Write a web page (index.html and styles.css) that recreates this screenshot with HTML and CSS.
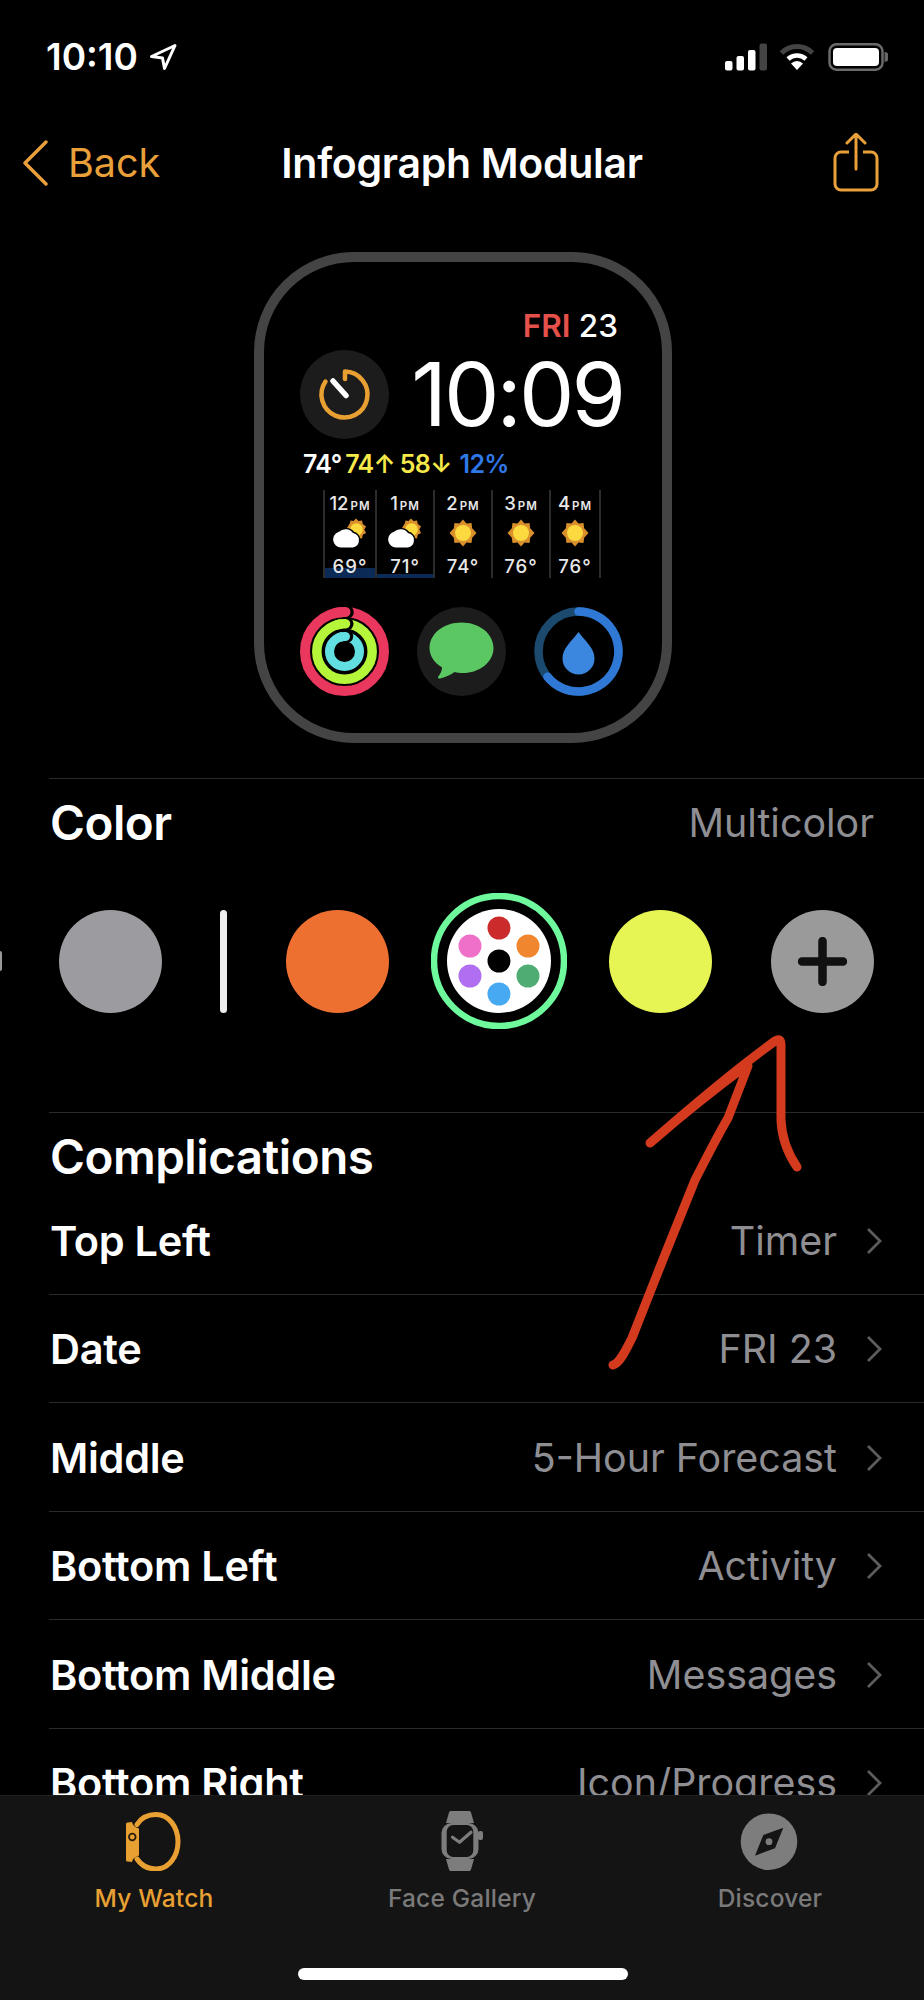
FILE: index.html
```html
<!DOCTYPE html>
<html lang="en">
<head>
<meta charset="utf-8">
<title>Infograph Modular</title>
<link rel="stylesheet" href="styles.css">
</head>
<body>
<svg class="defs" width="0" height="0" aria-hidden="true">
  <symbol id="sun" viewBox="0 0 30 30">
    <polygon fill="#d9902c" points="15,1.5 18.5,5.6 23.5,5 24.2,10.3 28.5,15 24.2,19.700 23.500,25 18.500,24.400 15,28.500 11.500,24.400 6.500,25 5.800,19.700 1.500,15 5.800,10.300 6.500,5 11.500,5.600"/>
    <circle cx="15" cy="15" r="8" fill="#fbd93f"/>
  </symbol>
  <symbol id="partly" viewBox="0 0 34 30">
    <polygon fill="#d9902c" points="23,0.500 25.500,3 29,2.500 29.800,6 33,8.500 31.300,11.500 33,15 29.800,16.800 29,20.500 25.500,20 23,22.500 20,20 17,20 16,16 14,10 17,5 17.500,2.500 20.500,3"/>
    <circle cx="23.500" cy="11.500" r="6.300" fill="#fbd93f"/>
    <path fill="#000" stroke="#000" stroke-width="3" d="M8 29.500a8 8 0 0 1-2-15.700A9.500 9.500 0 0 1 20 15a7.400 7.400 0 0 1 0 14.500z"/>
    <path fill="#fff" d="M8 29.500a8 8 0 0 1-2-15.700A9.500 9.500 0 0 1 20 15a7.400 7.400 0 0 1 0 14.500z"/>
  </symbol>
</svg>
<div class="screen">
  <header class="status">
    <div class="status-left">
      <span class="clock">10:10</span>
      <svg class="loc" viewBox="0 0 28 28"><path d="M26 2.500 2.500 13.500l11 1.500 2 10.500z" fill="none" stroke="#fff" stroke-width="3" stroke-linejoin="round"/></svg>
    </div>
    <div class="status-right">
      <svg class="signal" viewBox="0 0 42 28"><rect x="0" y="18" width="7.500" height="9.500" rx="2" fill="#fff"/><rect x="11.500" y="13" width="7.500" height="14.500" rx="2" fill="#fff"/><rect x="23" y="7" width="7.500" height="20.500" rx="2" fill="#fff"/><rect x="34.500" y="0.500" width="7.500" height="27" rx="2" fill="#444"/></svg>
      <svg class="wifi" viewBox="0 0 36 28"><path d="M2.500 10a22 22 0 0 1 31 0" fill="none" stroke="#444" stroke-width="5"/><path d="M9 16a13.500 13.500 0 0 1 18 0" fill="none" stroke="#fff" stroke-width="4.500"/><path d="M18 27l-6-6.500a8.400 8.400 0 0 1 12 0z" fill="#fff"/></svg>
      <svg class="battery" viewBox="0 0 60 28"><rect x="1.500" y="1.250" width="53" height="25.500" rx="7" fill="none" stroke="#6a6a6a" stroke-width="2.500"/><rect x="5" y="5" width="46" height="18" rx="4" fill="#fff"/><path d="M56.500 9a5 5 0 0 1 0 10z" fill="#666"/></svg>
    </div>
  </header>

  <nav class="nav">
    <div class="back">
      <svg class="back-chev" viewBox="0 0 26 46"><path d="M24 2 3 23l21 21" fill="none" stroke="#e9a03b" stroke-width="3.400" stroke-linecap="round" stroke-linejoin="round"/></svg>
      <span>Back</span>
    </div>
    <div class="title">Infograph Modular</div>
    <div class="share">
      <svg class="share-icon" viewBox="0 0 46 60"><path d="M16 19H8a6 6 0 0 0-6 6v26a6 6 0 0 0 6 6h30a6 6 0 0 0 6-6V25a6 6 0 0 0-6-6h-8" fill="none" stroke="#e9a03b" stroke-width="3"/><path d="M23 36V2M14 10l9-9 9 9" fill="none" stroke="#e9a03b" stroke-width="3" stroke-linecap="round" stroke-linejoin="round"/></svg>
    </div>
  </nav>

  <section class="watch">
    <div class="w-date"><span class="w-fri">FRI</span> 23</div>
    <div class="w-main">
      <svg class="w-comp" viewBox="0 0 89 89">
        <circle cx="44.500" cy="44.500" r="44.500" fill="#1c1c1c"/>
        <path d="M45 21.500V29M45 21.500a23 23 0 1 1-19.500 10" fill="none" stroke="#e9a033" stroke-width="4.500" stroke-linecap="round"/>
        <path d="M33 31 46 45.500" stroke="#fff" stroke-width="5.500" stroke-linecap="round"/>
      </svg>
      <div class="w-time">10:09</div>
    </div>
    <div class="w-weather"><span class="c-white">74°</span> <span class="c-yellow">74↑ 58↓</span> <span class="c-blue">12%</span></div>
    <div class="forecast">
      <div class="fc">
        <i class="rain rain-hi"></i>
        <div class="fc-h">12<small>PM</small></div>
        <svg class="fc-i"><use href="#partly"/></svg>
        <div class="fc-t">69°</div>
      </div>
      <div class="fc">
        <i class="rain rain-lo"></i>
        <div class="fc-h">1<small>PM</small></div>
        <svg class="fc-i"><use href="#partly"/></svg>
        <div class="fc-t">71°</div>
      </div>
      <div class="fc">
        <div class="fc-h">2<small>PM</small></div>
        <svg class="fc-i"><use href="#sun"/></svg>
        <div class="fc-t">74°</div>
      </div>
      <div class="fc">
        <div class="fc-h">3<small>PM</small></div>
        <svg class="fc-i"><use href="#sun"/></svg>
        <div class="fc-t">76°</div>
      </div>
      <div class="fc fc-last">
        <div class="fc-h">4<small>PM</small></div>
        <svg class="fc-i"><use href="#sun"/></svg>
        <div class="fc-t">76°</div>
      </div>
    </div>
    <div class="w-bottom">
      <svg class="w-comp" viewBox="0 0 89 89">
        <circle cx="44.500" cy="44.500" r="39.500" fill="none" stroke="#e9375d" stroke-width="10"/>
        <circle cx="44.500" cy="44.500" r="27.700" fill="none" stroke="#b5f53a" stroke-width="9.500"/>
        <circle cx="44.500" cy="44.500" r="15" fill="none" stroke="#62dfe0" stroke-width="9"/>
        <circle cx="47" cy="5" r="6.800" fill="#000"/>
        <circle cx="47" cy="16.800" r="6.500" fill="#000"/>
        <circle cx="47" cy="29.500" r="6.200" fill="#000"/>
        <path d="M35 6.160A39.500 39.500 0 0 1 45.500 5.010" fill="none" stroke="#e9375d" stroke-width="10" stroke-linecap="round"/>
        <path d="M37 17.830A27.700 27.700 0 0 1 45.500 16.820" fill="none" stroke="#b5f53a" stroke-width="9.500" stroke-linecap="round"/>
        <path d="M39 30.540A15 15 0 0 1 45.500 29.530" fill="none" stroke="#62dfe0" stroke-width="9" stroke-linecap="round"/>
      </svg>
      <svg class="w-comp" viewBox="0 0 89 89">
        <circle cx="44.500" cy="44.500" r="44.500" fill="#1c1c1c"/>
        <path fill="#5ac762" d="M44.500 15.500c17.600 0 32 11 32 25.500S62 66 46 66c-3 0-6-.3-8.500-1-4 3-10 5.500-14.500 6.500-1.800.3-2.600-1-1.500-2.300 2-2.400 3.400-5.400 3.600-8.700C17 55.800 12.500 48.500 12.500 41 12.500 26.500 26.900 15.500 44.500 15.500z"/>
      </svg>
      <svg class="w-comp" viewBox="0 0 89 89">
        <circle cx="44.500" cy="44.500" r="40" fill="none" stroke="#1b4a6e" stroke-width="8.500"/>
        <path d="M44.500 4.500a40 40 0 1 1-31.100 65.200" fill="none" stroke="#2f78d6" stroke-width="8.500" stroke-linecap="round"/>
        <path fill="#3b87e0" d="M44.500 25c7 9.500 16 16 16 26.500a16 16 0 0 1-32 0C28.500 41 37.500 34.500 44.500 25z"/>
      </svg>
    </div>
  </section>

  <section class="color">
    <div class="color-head">
      <h2 class="h-section">Color</h2>
      <span class="value">Multicolor</span>
    </div>
    <div class="swatches">
      <i class="edge"></i>
      <i class="swatch s-gray"></i>
      <i class="bar"></i>
      <i class="swatch s-orange"></i>
      <svg class="multi" viewBox="0 0 136 136">
        <circle cx="68" cy="68" r="65" fill="none" stroke="#6ef99c" stroke-width="6.500"/>
        <circle cx="68" cy="68" r="52" fill="#fff"/>
        <circle cx="68" cy="68" r="11.500" fill="#000"/>
        <circle cx="68" cy="35" r="11.500" fill="#cc2b2b"/>
        <circle cx="97" cy="53" r="11.500" fill="#f0862d"/>
        <circle cx="97" cy="83" r="11.500" fill="#4fac72"/>
        <circle cx="68" cy="101" r="11.500" fill="#47a9f2"/>
        <circle cx="39" cy="83" r="11.500" fill="#b06ef0"/>
        <circle cx="39" cy="53" r="11.500" fill="#ee70c8"/>
      </svg>
      <i class="swatch s-yellow"></i>
      <div class="swatch s-plus">
        <svg class="plus" viewBox="0 0 49 49"><path d="M24.500 4v41M4 24.500h41" stroke="#111" stroke-width="8.500" stroke-linecap="round"/></svg>
      </div>
    </div>
  </section>

  <section class="comps">
    <h2 class="h-section comps-title">Complications</h2>
    <ul class="rows">
      <li class="row"><span class="label">Top Left</span><span class="value">Timer</span><svg class="chev" viewBox="0 0 16 28"><path d="M2 2l12 12L2 26" fill="none" stroke="#5c5c5e" stroke-width="2.800"/></svg></li>
      <li class="row"><span class="label">Date</span><span class="value">FRI 23</span><svg class="chev" viewBox="0 0 16 28"><path d="M2 2l12 12L2 26" fill="none" stroke="#5c5c5e" stroke-width="2.800"/></svg></li>
      <li class="row"><span class="label">Middle</span><span class="value">5-Hour Forecast</span><svg class="chev" viewBox="0 0 16 28"><path d="M2 2l12 12L2 26" fill="none" stroke="#5c5c5e" stroke-width="2.800"/></svg></li>
      <li class="row"><span class="label">Bottom Left</span><span class="value">Activity</span><svg class="chev" viewBox="0 0 16 28"><path d="M2 2l12 12L2 26" fill="none" stroke="#5c5c5e" stroke-width="2.800"/></svg></li>
      <li class="row"><span class="label">Bottom Middle</span><span class="value">Messages</span><svg class="chev" viewBox="0 0 16 28"><path d="M2 2l12 12L2 26" fill="none" stroke="#5c5c5e" stroke-width="2.800"/></svg></li>
      <li class="row"><span class="label">Bottom Right</span><span class="value">Icon/Progress</span><svg class="chev" viewBox="0 0 16 28"><path d="M2 2l12 12L2 26" fill="none" stroke="#5c5c5e" stroke-width="2.800"/></svg></li>
    </ul>
  </section>

  <svg class="scribble" viewBox="0 0 924 2000">
    <path d="M613 1365C620 1363 626 1350 632 1338L662 1262L695 1180Q718 1135 728 1118L748 1066M650 1143Q700 1100 746 1066M650 1143C690 1108 735 1070 775 1041Q781 1037 781 1045L781 1120Q782 1145 797 1167" fill="none" stroke="#d43a1e" stroke-width="9" stroke-linecap="round" stroke-linejoin="round"/>
  </svg>

  <footer class="tabbar">
    <div class="tabs">
      <div class="tab tab-on">
        <svg class="tab-icon" viewBox="0 0 60 60"><path d="M13 13.500C17 7 24 3.500 32 3.500c13 0 22 12.500 22 27.200C54 45 45 58 32 58c-8 0-15-4-19-10" fill="none" stroke="#e9a033" stroke-width="5" stroke-linecap="round"/><path d="M3.500 11.500 8 11c.5 3 3 5.500 7 6.500v27c-4 1-6.500 3.500-7 6.500l-4.500-.5A1.500 1.500 0 0 1 2 49V13a1.500 1.500 0 0 1 1.500-1.500z" fill="#e9a033"/><circle cx="8.300" cy="26" r="3.300" fill="none" stroke="#2a1d08" stroke-width="1.800"/></svg>
        <span>My Watch</span>
      </div>
      <div class="tab">
        <svg class="tab-icon" viewBox="0 0 60 60"><path fill="#7d7d7d" d="M19 0h18c1 0 1.800.6 2 1.500L42 12H14l3-10.500C17.200.6 18 0 19 0zM14 48h28l-3 10.500c-.2.9-1 1.500-2 1.500H19c-1 0-1.800-.6-2-1.500z"/><rect x="9.500" y="12" width="37" height="36" rx="10" fill="#7d7d7d"/><rect x="46" y="20" width="5" height="9" rx="2" fill="#7d7d7d"/><rect x="14.700" y="14" width="26.600" height="32" rx="6.500" fill="#141414"/><path d="M20.500 26.300l7 5 11.500-10" fill="none" stroke="#7d7d7d" stroke-width="3.200" stroke-linecap="round" stroke-linejoin="round"/></svg>
        <span>Face Gallery</span>
      </div>
      <div class="tab">
        <svg class="tab-icon" viewBox="0 0 60 60"><circle cx="29" cy="30.700" r="28.300" fill="#7d7d7d"/><path fill="#141414" d="M43.300 16.700 35 37.300 15 44.700 23.300 24z"/><circle cx="29" cy="30.700" r="3.400" fill="#7d7d7d"/></svg>
        <span>Discover</span>
      </div>
    </div>
    <div class="home"></div>
  </footer>
</div>
</body>
</html>
```
FILE: styles.css
```css
* { box-sizing: border-box; }
html, body { margin: 0; background: #000; }
body { font-family: Inter, "Liberation Sans", sans-serif; color: #fff; }
.defs { position: absolute; }
.screen { position: relative; width: 924px; height: 2000px; overflow: hidden; background: #000; }

.status { height: 110px; display: flex; justify-content: space-between; align-items: flex-start; padding: 43px 36px 0 46px; }
.status-left { display: flex; align-items: center; gap: 11px; height: 28px; }
.clock { font-size: 37px; font-weight: 600; line-height: 28px; }
.loc { width: 28px; height: 28px; }
.status-right { display: flex; align-items: center; height: 28px; }
.signal { width: 42px; height: 28px; }
.wifi { width: 36px; height: 28px; margin-left: 12px; }
.battery { width: 60px; height: 28px; margin-left: 13px; }

.nav { height: 106px; display: grid; grid-template-columns: 1fr auto 1fr; align-items: center; padding: 0 45px; }
.back { display: flex; align-items: center; gap: 20px; margin-left: -23px; color: #e9a03b; font-size: 39.500px; }
.back-chev { width: 26px; height: 46px; }
.title { font-size: 41px; font-weight: 600; letter-spacing: -.3px; }
.share { display: flex; justify-content: flex-end; }
.share-icon { width: 46px; height: 60px; }

.watch { width: 418px; height: 491px; margin: 36px 0 35px 254px; border: 10px solid #444; border-radius: 100px; padding: 49px 36px 0; }
.w-date { height: 30px; line-height: 30px; text-align: right; padding-right: 8px; font-size: 31.500px; font-weight: 500; }
.w-fri { color: #e5504a; font-weight: 600; }
.w-main { display: flex; justify-content: space-between; align-items: center; margin-top: 9px; height: 89px; }
.w-comp { width: 89px; height: 89px; display: block; flex: none; }
.w-time { font-size: 88px; line-height: 89px; letter-spacing: -3px; padding-right: 3px; }
.w-weather { height: 30px; line-height: 30px; margin: 10px 0 0 3px; font-size: 25px; font-weight: 600; letter-spacing: -.6px; word-spacing: -2px; white-space: nowrap; }
.c-white { color: #fff; }
.c-yellow { color: #f6e94a; word-spacing: -1px; }
.c-blue { color: #2f78e8; margin-left: 4px; }

.forecast { display: grid; grid-template-columns: 52px 58px 58px 58px 52px; height: 87px; margin: 11px 0 0 23px; width: 278px; }
.fc { position: relative; border-left: 2px solid #2c2c2c; display: flex; flex-direction: column; align-items: center; }
.fc-last { border-right: 2px solid #2c2c2c; }
.fc-h { position: relative; height: 26px; line-height: 26px; font-size: 18.500px; font-weight: 500; color: #e8e8e8; white-space: nowrap; }
.fc-h small { font-size: 11.500px; font-weight: 600; letter-spacing: 1px; margin-left: 2px; }
.fc-i { display: block; width: 34px; height: 30px; margin-top: 2px; }
.fc-t { position: relative; height: 24px; line-height: 24px; margin-top: 6px; font-size: 18.500px; font-weight: 500; letter-spacing: 1px; color: #e8e8e8; }
.rain { position: absolute; left: 0; right: 0; bottom: 0; background: #0b2a55; }
.rain-hi { height: 10px; }
.rain-lo { height: 4px; }
.w-bottom { display: flex; gap: 28px; margin-top: 30px; }

.color { border-top: 1px solid #2a2a2a; margin-left: 49px; }
.color-head { height: 87px; display: flex; justify-content: space-between; align-items: center; padding: 0 50px 0 1px; }
.h-section { margin: 0; font-size: 47.500px; font-weight: 600; letter-spacing: -.5px; }
.value { font-size: 39.400px; color: #8e8e93; white-space: nowrap; }
.swatches { display: flex; align-items: center; height: 136px; margin: 27px 0 83px -49px; }
.edge { width: 2px; height: 20px; background: #999; border-radius: 0 2px 2px 0; margin-right: 57px; }
.swatch { display: block; flex: none; width: 103px; height: 103px; border-radius: 50%; }
.s-gray { background: #9c9ba0; }
.bar { width: 7px; height: 103px; border-radius: 4px; background: #eee; margin: 0 59px 0 58px; }
.s-orange { background: #ee7030; }
.multi { width: 136px; height: 136px; margin: 0 42px; flex: none; }
.s-yellow { background: #e6f553; }
.s-plus { background: #9a9a9a; margin-left: 59px; display: flex; align-items: center; justify-content: center; }
.plus { width: 49px; height: 49px; }

.comps { border-top: 1px solid #2a2a2a; margin-left: 49px; }
.comps-title { height: 73px; line-height: 88px; padding-left: 1px; }
.rows { list-style: none; margin: 0; padding: 0; }
.row { height: 108.500px; border-bottom: 1px solid #2a2a2a; display: flex; align-items: center; padding: 2px 42px 0 1px; }
.label { font-size: 41.500px; font-weight: 600; letter-spacing: -.3px; margin-right: auto; white-space: nowrap; }
.chev { width: 16px; height: 28px; margin-left: 29px; }

.scribble { position: absolute; left: 0; top: 0; width: 924px; height: 2000px; pointer-events: none; }

.tabbar { position: absolute; left: 0; right: 0; bottom: 0; height: 205px; background: #141414; border-top: 1px solid #1f1f1f; display: flex; flex-direction: column; }
.tabs { display: grid; grid-template-columns: repeat(3, 1fr); padding-top: 15px; }
.tab { display: flex; flex-direction: column; align-items: center; color: #7a7a7a; font-size: 24.500px; font-weight: 500; letter-spacing: .2px; }
.tab-on { color: #e9a033; }
.tab-icon { width: 60px; height: 60px; margin-bottom: 10px; }
.tab span { line-height: 34px; }
.home { width: 330px; height: 12px; border-radius: 6px; background: #fff; margin: 53px 0 0 298px; }
```
